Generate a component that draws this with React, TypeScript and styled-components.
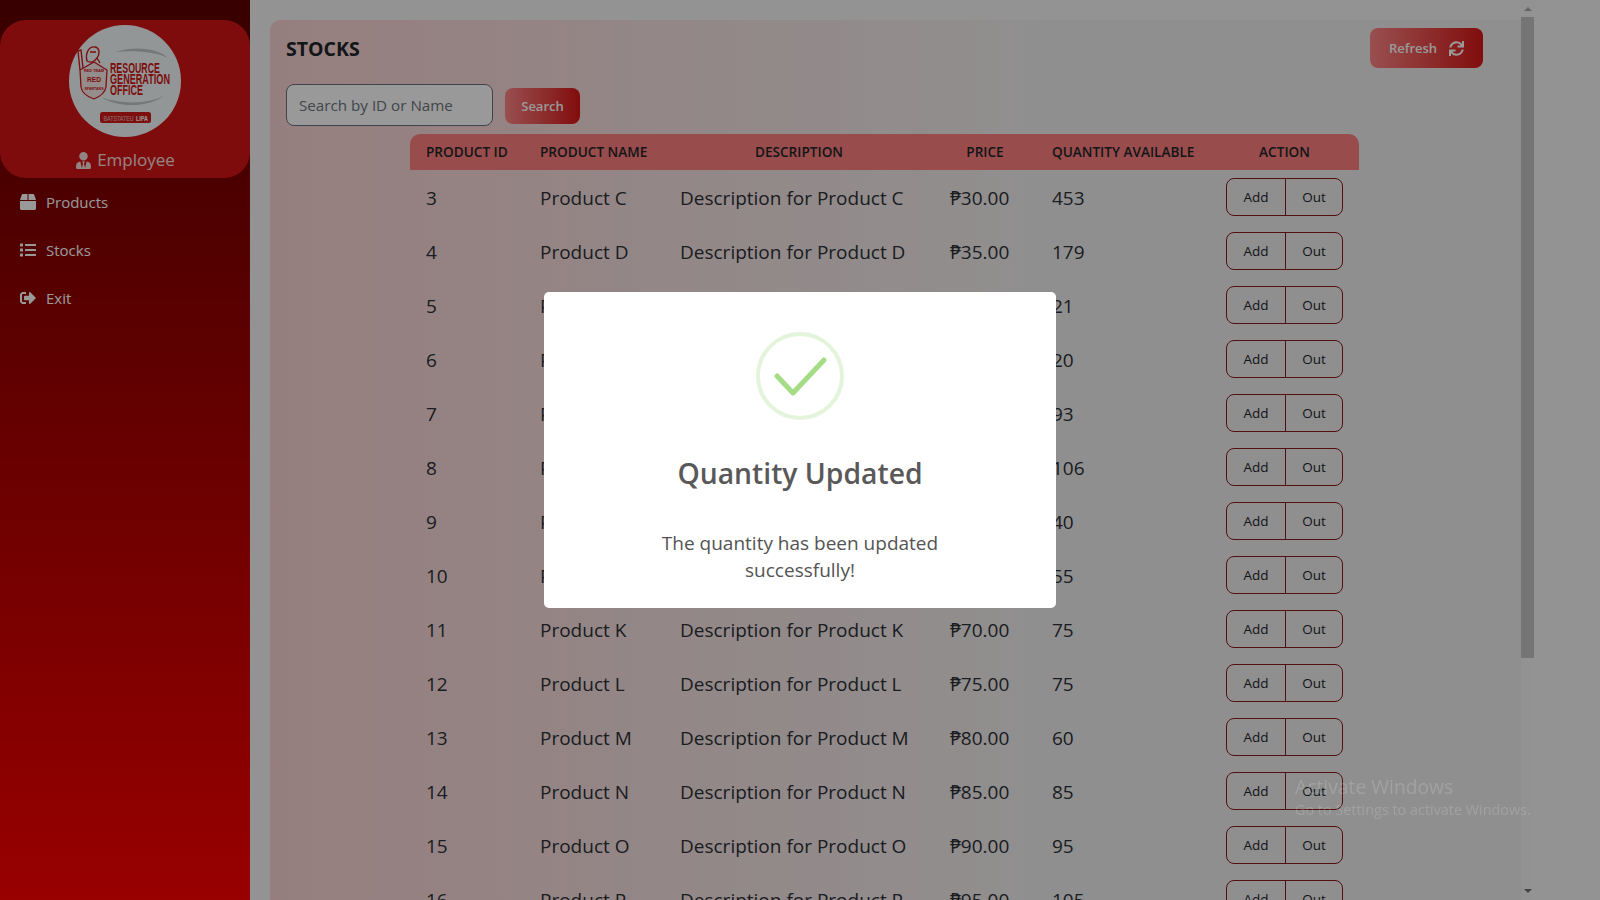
import React from "react";
import styled, { createGlobalStyle } from "styled-components";
import { FaBox, FaList, FaSignOutAlt, FaSync, FaUserTie } from "react-icons/fa";

const GlobalStyle = createGlobalStyle`
  html, body {
    margin: 0;
    height: 100%;
    overflow: hidden;
  }

  body {
    font-family: "Open Sans", "Noto Sans", sans-serif;
    color: #212529;
    background-color: #f6f6f6;
  }

  * {
    box-sizing: border-box;
  }
`;

const Page = styled.div`
  display: grid;
  grid-template-columns: 250px 1fr 13px 66px;
  height: 900px;
  overflow: hidden;
`;

const Sidebar = styled.aside`
  padding-top: 20px;
  background: linear-gradient(to bottom, #5e0000, #ff0000);
  color: #fff;
`;

const Brand = styled.div`
  display: flex;
  flex-direction: column;
  align-items: center;
  height: 158px;
  padding-top: 5px;
  background-color: #d41515;
  border-radius: 26px;
`;

const LogoDisc = styled.svg`
  width: 112px;
  height: 112px;
  margin-bottom: 11px;
`;

const Role = styled.div`
  display: flex;
  align-items: center;
  gap: 5px;
  font-size: 17px;
  line-height: 24px;
  opacity: 0.85;
`;

const Nav = styled.nav`
  display: flex;
  flex-direction: column;
`;

const NavItem = styled.a`
  display: flex;
  align-items: center;
  gap: 10px;
  height: 48px;
  padding-left: 20px;
  font-size: 15px;
  color: #fff;

  svg {
    width: 16px;
    height: 16px;
  }
`;

const Main = styled.main`
  padding: 20px 0 0 20px;
  overflow: hidden;
`;

const Panel = styled.section`
  display: flex;
  flex-direction: column;
  align-items: flex-start;
  min-height: 1000px;
  padding: 8px 38px 0 16px;
  background: linear-gradient(to right, #fbd3d3, #f1efef 62%);
  border-radius: 10px 0 0 0;
`;

const TopBar = styled.div`
  display: flex;
  align-items: center;
  justify-content: space-between;
  width: 100%;
  height: 40px;
`;

const Title = styled.h1`
  margin: 1px 0 0;
  font-size: 19.5px;
  font-weight: 700;
`;

const GradientButton = styled.button`
  display: flex;
  align-items: center;
  justify-content: center;
  gap: 12px;
  border: 0;
  border-radius: 8px;
  background: linear-gradient(to right, #ff8585, #d81616);
  color: #fff;
  font-family: inherit;
  font-size: 13px;
  font-weight: 600;
`;

const RefreshButton = styled(GradientButton)`
  width: 113px;
  height: 40px;

  svg {
    width: 15px;
    height: 15px;
  }
`;

const SearchButton = styled(GradientButton)`
  width: 75px;
  height: 36px;
  margin-top: 2px;
`;

const SearchRow = styled.form`
  display: flex;
  align-items: center;
  gap: 12px;
  margin-top: 16px;
`;

const SearchInput = styled.input`
  width: 207px;
  height: 42px;
  padding: 0 12px;
  border: 1px solid #6b7280;
  border-radius: 8px;
  background-color: #fff;
  font-family: inherit;
  font-size: 15.2px;

  &::placeholder {
    color: #6c757d;
    opacity: 1;
  }
`;

const Table = styled.table`
  width: 949px;
  margin: 8px 0 0 124px;
  border-collapse: collapse;
  table-layout: fixed;
`;

const HeadRow = styled.tr`
  height: 36px;
  background-color: #fe7f7f;
`;

const Head = styled.th<{ $left?: boolean }>`
  padding: 0 16px 2px;
  font-size: 13.6px;
  font-weight: 600;
  white-space: nowrap;
  text-align: ${(p) => (p.$left ? "left" : "center")};

  &:first-child {
    border-top-left-radius: 10px;
  }

  &:last-child {
    border-top-right-radius: 10px;
  }
`;

const Row = styled.tr`
  height: 54px;
`;

const Cell = styled.td`
  padding: 2px 16px 0;
  font-size: 19px;
  white-space: nowrap;
  color: #2d3136;
`;

const ActionCell = styled.td`
  padding: 0 16px;
`;

const ButtonGroup = styled.div`
  display: grid;
  grid-template-columns: 58px 1fr;
  width: 117px;
  height: 38px;
  border: 1px solid #8c1a1a;
  border-radius: 8px;
`;

const ActionButton = styled.button`
  padding: 0;
  border: 0;
  background: none;
  color: #212529;
  font-family: inherit;
  font-size: 13.5px;
  font-weight: 500;

  & + & {
    border-left: 1px solid #8c1a1a;
  }
`;

const ScrollTrack = styled.div`
  display: flex;
  flex-direction: column;
  align-items: center;
  height: 900px;
  background-color: #f4f4f4;
`;

const ScrollArrow = styled.div<{ $down?: boolean }>`
  width: 0;
  height: 0;
  margin: ${(p) => (p.$down ? "0 0 7px" : "7px 0 0")};
  border-left: 4px solid transparent;
  border-right: 4px solid transparent;
  border-${(p) => (p.$down ? "top" : "bottom")}: 4px solid ${(p) => (p.$down ? "#707070" : "#a8a8a8")};
`;

const ScrollThumb = styled.div`
  width: 13px;
  height: 641px;
  margin-top: 6px;
  margin-bottom: auto;
  background-color: #c4c4c4;
`;

const Overlay = styled.div`
  position: fixed;
  inset: 0;
  display: flex;
  align-items: center;
  justify-content: center;
  background-color: rgba(0, 0, 0, 0.4);
`;

const Modal = styled.div`
  display: flex;
  flex-direction: column;
  align-items: center;
  width: 512px;
  height: 316px;
  padding-top: 40px;
  background-color: #fff;
  border-radius: 5px;
`;

const SuccessIcon = styled.svg`
  width: 88px;
  height: 88px;
  margin-bottom: 33px;
`;

const ModalTitle = styled.h2`
  margin: 0 0 37px;
  font-size: 28.3px;
  line-height: 40px;
  font-weight: 600;
  color: #595959;
`;

const ModalText = styled.p`
  width: 300px;
  margin: 0;
  font-size: 19px;
  line-height: 27px;
  text-align: center;
  color: #545454;
`;

const Watermark = styled.div`
  position: fixed;
  left: 1295px;
  top: 774px;
  color: rgba(255, 255, 255, 0.16);
  font-size: 14.4px;
  line-height: 20px;
`;

const WatermarkTitle = styled.div`
  font-size: 19.3px;
  line-height: 26px;
`;

const products = [
  [3, "Product C", "₱30.00", 453],
  [4, "Product D", "₱35.00", 179],
  [5, "Product E", "₱40.00", 21],
  [6, "Product F", "₱45.00", 20],
  [7, "Product G", "₱50.00", 93],
  [8, "Product H", "₱55.00", 106],
  [9, "Product I", "₱60.00", 40],
  [10, "Product J", "₱65.00", 55],
  [11, "Product K", "₱70.00", 75],
  [12, "Product L", "₱75.00", 75],
  [13, "Product M", "₱80.00", 60],
  [14, "Product N", "₱85.00", 85],
  [15, "Product O", "₱90.00", 95],
  [16, "Product P", "₱95.00", 105],
] as const;

function Logo() {
  return (
    <LogoDisc viewBox="0 0 112 112">
      <circle cx="56" cy="56" r="56" fill="#f6fbfb" />
      <path d="M46 27 C68 20 90 24 99 33 C88 27 66 25 46 27 Z" fill="#c4c8c8" />
      <path d="M32 72 C50 84 82 82 96 70 C82 79 52 80 32 72 Z" fill="#c4c8c8" />
      <path
        d="M11 45 L25 37 L38 45 L37 62 C36 68 30 72 25 74 C19 72 13 68 12 62 Z"
        fill="#f8e9e9"
        stroke="#d01a1a"
        strokeWidth="1.3"
      />
      <path
        d="M11 45 L9 26 L12 25 L14 43 M18 36 C16 28 20 21 26 22 C31 23 31 29 28 33 L31 38 M18 36 C21 38 25 37 28 33 M21 27 L27 27"
        fill="none"
        stroke="#d01a1a"
        strokeWidth="1.4"
      />
      <g fill="#cf1414" fontFamily="Liberation Sans, sans-serif" fontWeight="700" textAnchor="middle">
        <text x="25" y="46.5" fontSize="3.4" textLength="20" lengthAdjust="spacingAndGlyphs">RED TEAM</text>
        <text x="25" y="56.5" fontSize="7.5" textLength="14" lengthAdjust="spacingAndGlyphs">RED</text>
        <text x="25" y="65" fontSize="3.8" textLength="19" lengthAdjust="spacingAndGlyphs">SPARTANS</text>
      </g>
      <g fill="#cf1414" fontFamily="Liberation Sans, sans-serif" fontWeight="700" fontSize="14">
        <text x="41" y="48" textLength="50" lengthAdjust="spacingAndGlyphs">RESOURCE</text>
        <text x="41" y="59" textLength="60" lengthAdjust="spacingAndGlyphs">GENERATION</text>
        <text x="41" y="70" textLength="33" lengthAdjust="spacingAndGlyphs">OFFICE</text>
      </g>
      <rect x="31" y="87" width="51" height="11" rx="2.5" fill="#d01a1a" />
      <g fill="#fff" fontFamily="Liberation Sans, sans-serif" fontSize="8">
        <text x="34.5" y="95.5" textLength="30" lengthAdjust="spacingAndGlyphs" opacity="0.7">BATSTATEU</text>
        <text x="67" y="95.5" textLength="12" lengthAdjust="spacingAndGlyphs" fontWeight="700">LIPA</text>
      </g>
    </LogoDisc>
  );
}

function App() {
  return (
    <>
      <GlobalStyle />
      <Page>
        <Sidebar>
          <Brand>
            <Logo />
            <Role>
              <FaUserTie size={17} />
              Employee
            </Role>
          </Brand>
          <Nav>
            <NavItem><FaBox />Products</NavItem>
            <NavItem><FaList />Stocks</NavItem>
            <NavItem><FaSignOutAlt />Exit</NavItem>
          </Nav>
        </Sidebar>

        <Main>
          <Panel>
            <TopBar>
              <Title>STOCKS</Title>
              <RefreshButton type="button">Refresh <FaSync /></RefreshButton>
            </TopBar>
            <SearchRow>
              <SearchInput placeholder="Search by ID or Name" />
              <SearchButton type="button">Search</SearchButton>
            </SearchRow>
            <Table>
              <colgroup>
                <col width="114" />
                <col width="140" />
                <col width="270" />
                <col width="102" />
                <col width="174" />
                <col width="149" />
              </colgroup>
              <thead>
                <HeadRow>
                  <Head $left>PRODUCT ID</Head>
                  <Head $left>PRODUCT NAME</Head>
                  <Head>DESCRIPTION</Head>
                  <Head>PRICE</Head>
                  <Head $left>QUANTITY AVAILABLE</Head>
                  <Head>ACTION</Head>
                </HeadRow>
              </thead>
              <tbody>
                {products.map(([id, name, price, quantity]) => (
                  <Row key={id}>
                    <Cell>{id}</Cell>
                    <Cell>{name}</Cell>
                    <Cell>Description for {name}</Cell>
                    <Cell>{price}</Cell>
                    <Cell>{quantity}</Cell>
                    <ActionCell>
                      <ButtonGroup>
                        <ActionButton type="button">Add</ActionButton>
                        <ActionButton type="button">Out</ActionButton>
                      </ButtonGroup>
                    </ActionCell>
                  </Row>
                ))}
              </tbody>
            </Table>
          </Panel>
        </Main>

        <ScrollTrack>
          <ScrollArrow />
          <ScrollThumb />
          <ScrollArrow $down />
        </ScrollTrack>
        <div />
      </Page>

      <Overlay>
        <Modal>
          <SuccessIcon viewBox="0 0 88 88">
            <circle cx="44" cy="44" r="42" fill="none" stroke="#a5dc86" strokeOpacity="0.3" strokeWidth="4" />
            <path
              d="M21 44 L37 61 L68 28"
              fill="none"
              stroke="#a5dc86"
              strokeWidth="5"
              strokeLinecap="round"
              strokeLinejoin="round"
            />
          </SuccessIcon>
          <ModalTitle>Quantity Updated</ModalTitle>
          <ModalText>The quantity has been updated successfully!</ModalText>
        </Modal>
      </Overlay>

      <Watermark>
        <WatermarkTitle>Activate Windows</WatermarkTitle>
        Go to Settings to activate Windows.
      </Watermark>
    </>
  );
}

export default App;
